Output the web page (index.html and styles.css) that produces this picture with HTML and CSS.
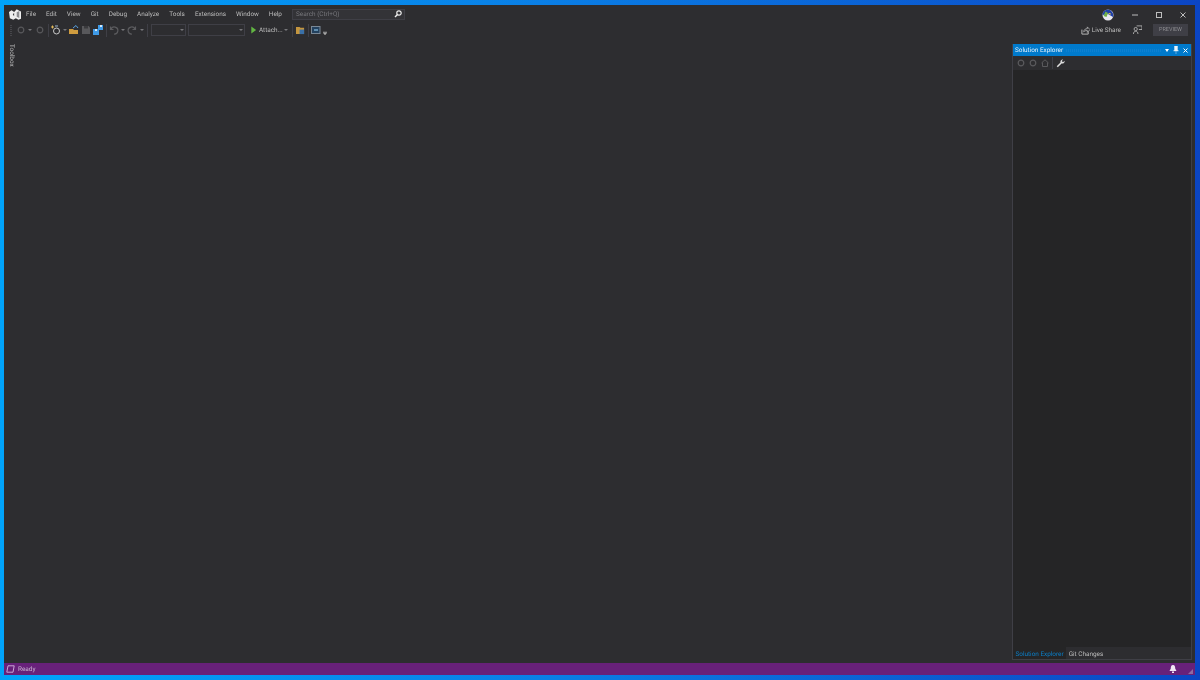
FILE: index.html
```html
<!DOCTYPE html>
<html lang="en">
<head>
<meta charset="utf-8">
<title>Visual Studio</title>
<link rel="stylesheet" href="styles.css">
</head>
<body>
<div class="window">
  <header class="titlebar">
    <svg class="logo" viewBox="0 0 14 12" width="12" height="11"><path d="M0 3 3 1l3 2 3-3 3 1.500 2 1V11l-3 1-3-1.500L5 12l-4-1.500z" fill="#eeeeee"/><path d="M9 3.500 12 2v8l-3-1.500z" fill="#8d8d90"/><path d="M4.500 6 6 4v4z" fill="#38383b"/></svg>
    <nav class="menu">
      <span class="menu-item">File</span><span class="menu-item">Edit</span><span class="menu-item">View</span><span class="menu-item">Git</span><span class="menu-item">Debug</span><span class="menu-item">Analyze</span><span class="menu-item">Tools</span><span class="menu-item">Extensions</span><span class="menu-item">Window</span><span class="menu-item">Help</span>
    </nav>
    <div class="search">
      <span class="search-text">Search (Ctrl+Q)</span>
      <svg viewBox="0 0 8 8" width="8" height="8"><circle cx="5" cy="3" r="2.200" fill="none" stroke="#eeeeee" stroke-width="1.200"/><path d="M3.500 4.500 1 7" stroke="#eeeeee" stroke-width="1.500"/></svg>
    </div>
    <div class="caption">
      <svg class="avatar" viewBox="0 0 12 12" width="12" height="12"><circle cx="6" cy="6" r="5.500" fill="#e8e8f0"/><path d="M.5 6A5.500 5.500 0 0 1 6 .5 6 6 0 0 1 11 8L6 5z" fill="#1f3fa8"/><path d="M1.500 7 3.500 2.500 6 4 4.500 8z" fill="#6fae4a"/><path d="M6 4h2.500v2z" fill="#e3c84a"/></svg>
      <span class="cap-btn"><svg viewBox="0 0 8 8" width="8" height="8"><path d="M1 4h6" stroke="#bdbdbd"/></svg></span>
      <span class="cap-btn"><svg viewBox="0 0 8 8" width="8" height="8"><rect x="1.500" y="1.500" width="5" height="5" fill="none" stroke="#bdbdbd"/></svg></span>
      <span class="cap-btn"><svg viewBox="0 0 8 8" width="8" height="8"><path d="M1.500 1.500l5 5m0-5-5 5" stroke="#bdbdbd"/></svg></span>
    </div>
  </header>

  <div class="toolbar">
    <span class="grip"></span>
    <span class="slot first"><svg viewBox="0 0 8 8" width="8" height="8"><circle cx="4" cy="4" r="2.800" fill="none" stroke="#58585b" stroke-width="1.200"/></svg></span>
    <span class="arrow wide"></span>
    <span class="slot"><svg viewBox="0 0 8 8" width="8" height="8"><circle cx="4" cy="4" r="2.800" fill="none" stroke="#58585b" stroke-width="1.200"/></svg></span>
    <span class="sep"></span>
    <span class="slot"><svg viewBox="0 0 10 10" width="10" height="10"><circle cx="5.500" cy="6" r="3" fill="none" stroke="#c9c9c9"/><path d="M0 2h3M1.500 .5v3" stroke="#e0b85a"/><path d="M4 1h3" stroke="#9fb8d0"/></svg></span>
    <span class="arrow"></span>
    <span class="slot"><svg viewBox="0 0 10 10" width="10" height="10"><path d="M0 4h4l1 1h4v4H0z" fill="#cf9c3f"/><path d="M4 3 7 .5 9 3" fill="none" stroke="#5aa0dc"/></svg></span>
    <span class="slot"><svg viewBox="0 0 8 8" width="8" height="8"><path d="M0 0h6.500L8 1.500V8H0z" fill="#58585b"/><path d="M2 0h4v2.500H2z" fill="#3a3a3d"/></svg></span>
    <span class="slot"><svg viewBox="0 0 10 10" width="10" height="10"><path d="M5 0h5v5H5z" fill="#3f9ae6"/><path d="M0 4h6v6H0z" fill="#3f9ae6"/><path d="M2 4h2v2H2zM7 0h2v2H7z" fill="#d6e8f8"/></svg></span>
    <span class="sep narrow"></span>
    <span class="slot"><svg viewBox="0 0 10 10" width="10" height="10"><path d="M1.500 1.500v3h3M2 4.500A3.500 3.500 0 1 1 5 9" fill="none" stroke="#5b5b5e" stroke-width="1.200"/></svg></span>
    <span class="arrow"></span>
    <span class="slot"><svg viewBox="0 0 10 10" width="10" height="10"><path d="M8.500 1.500v3h-3M8 4.500A3.500 3.500 0 1 0 5 9" fill="none" stroke="#5b5b5e" stroke-width="1.200"/></svg></span>
    <span class="arrow wide"></span>
    <span class="sep tight"></span>
    <span class="combo small"><span class="arrow"></span></span>
    <span class="combo large"><span class="arrow"></span></span>
    <span class="slot play"><svg viewBox="0 0 8 8" width="7" height="8"><path d="M1.500 0 7 4 1.500 8z" fill="#62b543"/></svg></span>
    <span class="attach">Attach...</span>
    <span class="arrow"></span>
    <span class="sep even"></span>
    <span class="slot mini"><svg viewBox="0 0 10 10" width="9" height="9"><path d="M0 1h4l1 1h4v7H0z" fill="#c4953e"/><path d="M4 4h5v5H4z" fill="#3a70a8"/></svg></span>
    <span class="sep even"></span>
    <span class="slot mini"><svg viewBox="0 0 10 8" width="10" height="8"><rect x=".5" y=".5" width="8.500" height="7" fill="#23415e" stroke="#7a8896"/><path d="M3 3h4v2H3z" fill="#5f8daf"/></svg></span>
    <span class="overflow"><svg viewBox="0 0 4 4" width="4" height="4"><path d="M0 0h4M0 1.500h4L2 4z" fill="#a8a8a8" stroke="#a8a8a8" stroke-width=".5"/></svg></span>
    <div class="tool-right">
      <svg viewBox="0 0 10 10" width="9" height="9"><path d="M1 4v5h7V6" fill="none" stroke="#c4c4c4"/><path d="M3 6.500C3 4 5 3 7 3V1l3 3-3 3V5C5 5 4 5.500 3 6.500z" fill="none" stroke="#c4c4c4" stroke-width=".8"/></svg>
      <span class="live">Live Share</span>
      <svg class="feedback" viewBox="0 0 10 10" width="9" height="9"><circle cx="3" cy="4.500" r="1.800" fill="none" stroke="#bdbdbd" stroke-width=".9"/><path d="M.5 10c0-2 1-3 2.500-3s2.500 1 2.500 3M4 1h6v4H6.500" fill="none" stroke="#bdbdbd" stroke-width=".9"/></svg>
      <span class="preview">PREVIEW</span>
    </div>
  </div>

  <main class="workspace">
    <aside class="toolbox">
      <span class="toolbox-marker"></span>
      <span class="toolbox-label">Toolbox</span>
    </aside>
    <div class="editor"></div>
    <section class="panel">
      <div class="panel-head">
        <span class="panel-title">Solution Explorer</span>
        <span class="panel-dots"></span>
        <span class="head-down"></span>
        <svg viewBox="0 0 6 8" width="6" height="8"><path d="M1.500 0h3v4l1 1H.5l1-1zM3 5v3" fill="#eaf4fb" stroke="#eaf4fb" stroke-width=".4"/></svg>
        <svg viewBox="0 0 7 7" width="7" height="7"><path d="M1.500 1.500l4 4m0-4-4 4" stroke="#ffffff"/></svg>
      </div>
      <div class="panel-tools">
        <span class="ptool"><svg viewBox="0 0 8 8" width="8" height="8"><circle cx="4" cy="4" r="2.800" fill="none" stroke="#5a5a5d" stroke-width="1.200"/></svg></span>
        <span class="ptool"><svg viewBox="0 0 8 8" width="8" height="8"><circle cx="4" cy="4" r="2.800" fill="none" stroke="#5a5a5d" stroke-width="1.200"/></svg></span>
        <span class="ptool"><svg viewBox="0 0 8 8" width="8" height="8"><path d="M.5 4 4 .8 7.500 4M1.500 3.500V7.500h5V3.500" fill="none" stroke="#5a5a5d"/></svg></span>
        <span class="psep"></span>
        <span class="ptool"><svg viewBox="0 0 10 10" width="9" height="9"><path d="M.8 8 5 3.800a2.600 2.600 0 0 1 3-3.300L6.300 2.200l1.500 1.500L9.500 2A2.600 2.600 0 0 1 6.200 5L2 9.200z" fill="#e0e0e0"/></svg></span>
      </div>
      <div class="panel-body"></div>
      <div class="panel-tabs">
        <span class="ptab active">Solution Explorer</span>
        <span class="ptab">Git Changes</span>
      </div>
    </section>
  </main>

  <footer class="status">
    <svg viewBox="0 0 9 8" width="9" height="8"><path d="M2 .8h6.200L7 7.200H.8z" fill="none" stroke="#c9a6d6"/></svg>
    <span class="ready">Ready</span>
    <svg class="bell" viewBox="0 0 8 8" width="8" height="8"><path d="M4 0C2 0 1.800 2 1.800 3.500L.5 6h7L6.200 3.500C6.200 2 6 0 4 0zM3 6.500h2V8H3z" fill="#f0e6f4"/></svg>
    <svg class="resize" viewBox="0 0 5 5" width="5" height="5"><path d="M5 0v5H0z" fill="#8f6aa3"/></svg>
  </footer>
</div>
</body>
</html>
```

FILE: styles.css
```css
* { box-sizing: border-box; }

html, body { height: 100%; margin: 0; }

body {
  padding: 5px 5px 5px 4px;
  background: linear-gradient(90deg, #00a4fb 0%, #0a7fe6 45%, #0b45c4 100%);
  font-family: Roboto, "Open Sans", sans-serif;
  font-size: 6.400px;
  text-rendering: geometricPrecision;
  color: #bcbcbc;
  overflow: hidden;
}

svg { display: block; flex: none; }

.window {
  display: flex;
  flex-direction: column;
  height: 670px;
  background: #2d2d30;
  filter: blur(.35px);
}

.titlebar {
  display: flex;
  align-items: center;
  height: 17px;
  padding-left: 5px;
  flex: none;
}

.logo { margin-top: 2px; }

.menu { display: flex; margin-top: 1px; }

.menu-item { padding: 0 5px; white-space: nowrap; }

.search {
  display: flex;
  align-items: center;
  justify-content: space-between;
  width: 113px;
  height: 11px;
  margin-left: 5px;
  margin-top: 1px;
  padding: 0 2px 0 3px;
  background: #333337;
  border: 1px solid #3f3f46;
  color: #77777c;
}

.caption {
  display: flex;
  align-items: center;
  margin-left: auto;
  margin-top: 2px;
}

.avatar { margin-right: 9px; }

.cap-btn {
  display: flex;
  justify-content: center;
  width: 24px;
}

.toolbar {
  display: flex;
  align-items: center;
  height: 16px;
  padding-left: 6px;
  flex: none;
}

.grip {
  width: 2px;
  height: 11px;
  background: repeating-linear-gradient(0deg, #46464a 0 1px, transparent 1px 2px);
}

.slot {
  display: flex;
  align-items: center;
  justify-content: center;
  width: 12px;
}

.slot.first { width: 10px; margin-left: 4px; }

.slot.play { margin-left: 2px; }

.slot.mini { width: 10px; }

.arrow {
  display: flex;
  justify-content: center;
  width: 6px;
  height: 2px;
}

.arrow::before {
  content: "";
  border-left: 2px solid transparent;
  border-right: 2px solid transparent;
  border-top: 2px solid #77777a;
}

.arrow.wide { width: 8px; }

.sep {
  width: 4px;
  height: 13px;
  background: linear-gradient(#3f3f46, #3f3f46) center / 1px 100% no-repeat;
}

.sep.tight { width: 3px; }
.sep.even { width: 6px; }

.combo {
  display: flex;
  align-items: center;
  justify-content: flex-end;
  height: 12px;
  margin-left: 2px;
  background: #2d2d30;
  border: 1px solid #3f3f46;
}

.combo.small { width: 35px; }
.combo.large { width: 57px; }

.attach { width: 24px; white-space: nowrap; }

.overflow { display: flex; width: 8px; justify-content: center; padding-top: 6px; }

.tool-right {
  display: flex;
  align-items: center;
  margin-left: auto;
  padding-right: 7px;
}

.live { margin-left: 2px; white-space: nowrap; }

.feedback { margin-left: 12px; margin-top: -2px; }

.preview {
  display: flex;
  align-items: center;
  justify-content: center;
  width: 35px;
  height: 12px;
  margin-left: 11px;
  margin-top: -1px;
  background: #3f3f46;
  color: #8a8a8e;
  font-size: 5.500px;
}

.workspace {
  display: flex;
  flex: 1;
  min-height: 0;
}

.toolbox {
  display: flex;
  width: 10px;
  flex: none;
  padding-top: 6px;
}

.toolbox-marker {
  width: 3px;
  height: 24px;
  background: #3f3f46;
}

.toolbox-label {
  writing-mode: vertical-rl;
  margin-left: 4px;
  height: 24px;
  white-space: nowrap;
}

.editor { flex: 1; }

.panel {
  display: flex;
  flex-direction: column;
  width: 180px;
  margin: 6px 3px 3px 0;
  background: #252526;
  border: 1px solid #3f3f46;
  border-top: 0;
  flex: none;
}

.panel-head {
  display: flex;
  align-items: center;
  gap: 3px;
  height: 12px;
  padding: 0 2px 0 2px;
  background: #007acc;
  color: #e4f1fa;
  flex: none;
}

.panel-title { white-space: nowrap; }

.panel-dots {
  flex: 1;
  height: 3px;
  background: repeating-linear-gradient(90deg, #0f80cf 0 1px, transparent 1px 2px);
}

.head-down {
  margin-right: 1.500px;
  border-left: 2.500px solid transparent;
  border-right: 2.500px solid transparent;
  border-top: 3px solid #ffffff;
}

.panel-tools {
  display: flex;
  align-items: center;
  height: 14px;
  padding-left: 2px;
  background: #2d2d30;
  flex: none;
}

.ptool {
  display: flex;
  justify-content: center;
  width: 12px;
}

.psep {
  width: 1px;
  height: 12px;
  margin: 0 1px;
  background: #3f3f46;
}

.panel-body { flex: 1; }

.panel-tabs {
  display: flex;
  height: 12px;
  background: #2d2d30;
  flex: none;
}

.ptab {
  display: flex;
  align-items: center;
  padding: 1px 2.500px 0;
  white-space: nowrap;
}

.ptab.active {
  background: #252526;
  color: #0a7fc9;
}

.status {
  display: flex;
  align-items: center;
  height: 12px;
  padding: 0 2px 0 2px;
  background: #68217a;
  color: #c9b3d2;
  flex: none;
}

.ready { margin-left: 3px; }

.bell { margin-left: auto; margin-right: 11px; }

.resize { align-self: flex-end; margin-bottom: 1px; }
```
